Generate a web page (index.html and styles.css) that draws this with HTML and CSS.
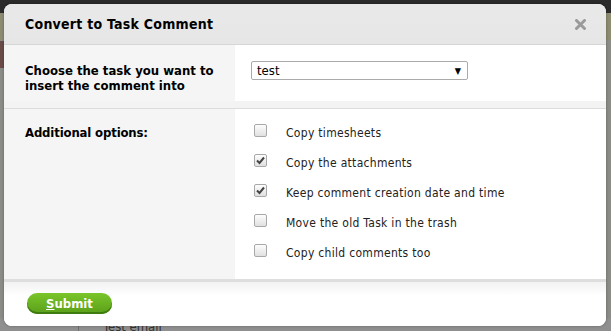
FILE: index.html
```html
<!DOCTYPE html>
<html lang="en">
<head>
    <meta charset="UTF-8">
    <title>Convert to Task Comment</title>
    <link rel="stylesheet" href="styles.css">
</head>
<body>
    <div class="topbar"></div>
    <div class="band"></div>
    <div class="side-mark"></div>
    <div class="behind">
        <span class="behind-line"></span>
        <span class="behind-text">Test email</span>
    </div>

    <div class="dialog">
        <div class="dialog-head">
            <h1>Convert to Task Comment</h1>
            <span class="close">
                <svg width="11" height="11" viewBox="0 0 11 11">
                    <path d="M1.5 1.5 L9.5 9.5 M9.5 1.5 L1.5 9.5" stroke="#9a9a9a" stroke-width="3" stroke-linecap="round"/>
                </svg>
            </span>
        </div>

        <div class="row row-task">
            <div class="cell-label">Choose the task you want to insert the comment into</div>
            <div class="cell-field">
                <div class="select">
                    <span>test</span>
                    <span class="arrow">&#9660;</span>
                </div>
            </div>
        </div>
        <div class="gap"></div>

        <div class="row row-options">
            <div class="cell-label">Additional options:</div>
            <div class="cell-field options">
                <label class="option"><span class="box"></span>Copy timesheets</label>
                <label class="option"><span class="box"><svg width="9" height="9" viewBox="0 0 9 9"><path d="M1 4.5 L3.5 7 L8 1.5" stroke="#444" stroke-width="2" fill="none"/></svg></span>Copy the attachments</label>
                <label class="option"><span class="box"><svg width="9" height="9" viewBox="0 0 9 9"><path d="M1 4.5 L3.5 7 L8 1.5" stroke="#444" stroke-width="2" fill="none"/></svg></span>Keep comment creation date and time</label>
                <label class="option"><span class="box"></span>Move the old Task in the trash</label>
                <label class="option"><span class="box"></span>Copy child comments too</label>
            </div>
        </div>

        <div class="dialog-foot">
            <button type="button" class="submit"><u>S</u>ubmit</button>
        </div>
    </div>
</body>
</html>
```

FILE: styles.css
```css
body {
    margin: 0;
    width: 611px;
    height: 331px;
    overflow: hidden;
    position: relative;
    background-color: #8b8b87;
    font-family: "DejaVu Sans Condensed", "DejaVu Sans", sans-serif;
}

.topbar {
    height: 13px;
    background-color: #2b2b2b;
}

.band {
    height: 27px;
    background-color: #8d8b72;
}

.side-mark {
    position: absolute;
    left: 0;
    top: 41px;
    width: 4px;
    height: 27px;
    background-color: #6b4b48;
}

.behind {
    position: absolute;
    left: 0;
    top: 318px;
    width: 611px;
    height: 13px;
    background-color: #8f8f8f;
}

.behind-line {
    position: absolute;
    left: 78px;
    top: 0;
    width: 1px;
    height: 13px;
    background-color: #6f6f6f;
}

.behind-text {
    position: absolute;
    left: 103px;
    top: 1px;
    font-size: 13px;
    color: #333;
}

.dialog {
    position: absolute;
    left: 4px;
    top: 4px;
    width: 602px;
    height: 322px;
    border-radius: 8px;
    background-color: #fff;
    overflow: hidden;
    display: flex;
    flex-direction: column;
    box-shadow: 0 0 3px rgba(0, 0, 0, 0.3);
}

.dialog-head {
    height: 40px;
    display: flex;
    align-items: center;
    justify-content: space-between;
    padding: 0 20px 0 21px;
    background: linear-gradient(#e9e9e9, #e6e6e6);
    border-bottom: 1px solid #d6d6d6;
}

.dialog-head h1 {
    margin: 0;
    font-size: 14px;
    font-weight: bold;
    letter-spacing: 0.25px;
    color: #000;
}

.close {
    display: flex;
}

.row {
    display: flex;
}

.cell-label {
    background-color: #f5f5f5;
    font-size: 13px;
    font-weight: bold;
    color: #000;
    line-height: 15px;
}

.cell-field {
    flex: 1;
    background-color: #fff;
}

.row-task {
    height: 56px;
}

.row-task .cell-label {
    padding: 18px 20px 0 21px;
    width: 190px;
}

.row-task .cell-field {
    padding: 16px 0 0 16px;
}

.select {
    width: 204px;
    height: 17px;
    border: 1px solid #aaa;
    border-radius: 2px;
    display: flex;
    align-items: center;
    justify-content: space-between;
    padding: 0 6px 0 5px;
    font-size: 13px;
    color: #000;
}

.arrow {
    font-size: 9px;
}

.gap {
    height: 7px;
    background-color: #f3f3f3;
    border-bottom: 1px solid #dcdcdc;
}

.row-options {
    height: 170px;
    border-bottom: 3px solid #dedede;
}

.row-options .cell-label {
    padding: 16px 0 0 21px;
    width: 210px;
    letter-spacing: -0.15px;
}

.options {
    padding: 16px 0 0 19px;
    display: flex;
    flex-direction: column;
    gap: 15px;
}

.option {
    display: flex;
    align-items: center;
    height: 15px;
    font-size: 12px;
    letter-spacing: 0.3px;
    color: #222;
}

.box {
    width: 11px;
    height: 11px;
    border: 1px solid #a8a8a8;
    border-radius: 2px;
    background: linear-gradient(#fdfdfd, #e0e0e0);
    margin: -4px 19px 0 0;
    display: flex;
    align-items: center;
    justify-content: center;
}

.dialog-foot {
    flex: 1;
    background: linear-gradient(#f2f2f2, #fff 14px);
    padding: 11px 0 0 23px;
}

.submit {
    width: 85px;
    height: 21px;
    border: none;
    border-radius: 10px;
    background: linear-gradient(#7ac52a, #5a9f1a);
    box-shadow: inset 0 -2px 0 #3f7c10;
    color: #fff;
    font-family: "DejaVu Sans Condensed", "DejaVu Sans", sans-serif;
    font-size: 13px;
    font-weight: bold;
    cursor: pointer;
    padding: 0;
}
```
